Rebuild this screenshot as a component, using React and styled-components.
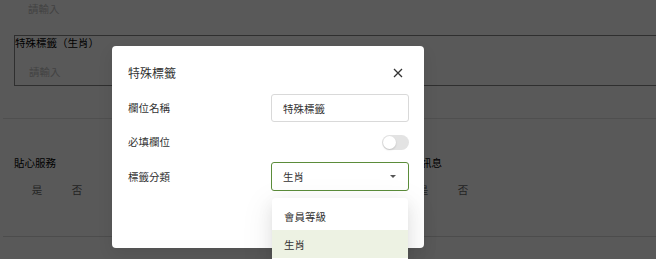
import React from 'react';
import styled, { createGlobalStyle } from 'styled-components';

const GlobalStyle = createGlobalStyle`
  html, body { margin: 0; padding: 0; background: #fff; overflow: hidden; }
  body { font-family: "Noto Sans CJK TC", "Noto Sans", sans-serif; color: #333; }
  * { box-sizing: border-box; }
`;

const Page = styled.div`
  position: relative;
  width: 656px;
  height: 259px;
  overflow: hidden;
  padding-left: 14px;
`;

const TopField = styled.div`
  height: 35px;
  padding-left: 14px;
`;

const Placeholder = styled.div`
  font-size: 10.5px;
  line-height: 18px;
  color: #bfbfbf;
  margin-top: ${(p) => p.$top || 0}px;
`;

const EditingBox = styled.div`
  width: 700px;
  height: 51px;
  border: 1px solid #888;
  border-right: none;
`;

const BoxLabel = styled.div`
  font-size: 10.5px;
  line-height: 14px;
  color: #000;
`;

const BoxBody = styled.div`
  padding-left: 14px;
`;

const Divider = styled.div`
  height: 1px;
  background: ${(p) => p.$color};
  margin-top: ${(p) => p.$top}px;
  margin-left: -11px;
  width: 680px;
`;

const Sections = styled.div`
  display: grid;
  grid-template-columns: 386px 386px;
  margin-top: 36px;
`;

const Section = styled.div`
  display: flex;
  flex-direction: column;
`;

const SectionTitle = styled.div`
  font-size: 10.5px;
  line-height: 16px;
  color: #000;
`;

const Options = styled.div`
  display: flex;
  margin-top: 11px;
  margin-left: 3px;
`;

const Option = styled.div`
  width: 40px;
  text-align: center;
  font-size: 10.5px;
  line-height: 16px;
  color: #666;
`;

const Overlay = styled.div`
  position: absolute;
  inset: 0;
  background: rgba(0, 0, 0, 0.65);
`;

const Modal = styled.div`
  position: absolute;
  left: 112px;
  top: 46px;
  width: 312px;
  height: 202px;
  background: #fff;
  border-radius: 4px;
  padding: 16px 15px 0 16px;
  box-shadow: 0 6px 16px rgba(0, 0, 0, 0.08);
`;

const Header = styled.div`
  display: flex;
  align-items: center;
  justify-content: space-between;
  height: 22px;
`;

const Title = styled.div`
  font-size: 12px;
  color: #333;
  line-height: 22px;
`;

const CloseButton = styled.div`
  width: 22px;
  height: 22px;
  display: flex;
  align-items: center;
  justify-content: center;
  margin-right: 0;
`;

const Form = styled.div`
  display: grid;
  grid-template-columns: 1fr 138px;
  row-gap: 6px;
  align-items: center;
  margin-top: 10px;
`;

const Label = styled.div`
  font-size: 10.5px;
  color: #333;
  line-height: 16px;
`;

const Input = styled.div`
  height: 28px;
  border: 1px solid #d9d9d9;
  border-radius: 3px;
  padding: 0 11px;
  display: flex;
  align-items: center;
  font-size: 10.5px;
  color: #333;
`;

const SwitchCell = styled.div`
  height: 28px;
  display: flex;
  align-items: center;
  justify-content: flex-end;
`;

const Track = styled.div`
  position: relative;
  width: 27px;
  height: 15px;
  border-radius: 8px;
  background: #e3e3e3;
`;

const Knob = styled.div`
  position: absolute;
  left: 1px;
  top: 1px;
  width: 13px;
  height: 13px;
  border-radius: 50%;
  background: #fff;
  box-shadow: 0 1px 2px rgba(0, 0, 0, 0.15);
`;

const SelectWrap = styled.div`
  position: relative;
`;

const Select = styled.div`
  height: 29px;
  border: 1px solid #5b8c3a;
  border-radius: 3px;
  padding: 0 11px;
  display: flex;
  align-items: center;
  justify-content: space-between;
  font-size: 10.5px;
  color: #333;
`;

const Caret = styled.span`
  width: 0;
  height: 0;
  border-left: 3px solid transparent;
  border-right: 3px solid transparent;
  border-top: 3.5px solid #555;
  margin-right: 1px;
`;

const Dropdown = styled.div`
  position: absolute;
  left: 1px;
  right: 1px;
  top: calc(100% + 7px);
  background: #fff;
  border-radius: 4px;
  padding: 4px 0;
  box-shadow: 0 3px 6px -4px rgba(0, 0, 0, 0.12), 0 6px 16px rgba(0, 0, 0, 0.08),
    0 9px 28px 8px rgba(0, 0, 0, 0.05);
  z-index: 2;
`;

const Item = styled.div`
  height: 28px;
  padding: 0 12px;
  display: flex;
  align-items: center;
  font-size: 10.5px;
  color: #333;
  background: ${(p) => (p.$selected ? '#edf2e3' : '#fff')};
`;

export default function App() {
  return (
    <>
      <GlobalStyle />
      <Page>
        <TopField>
          <Placeholder>請輸入</Placeholder>
        </TopField>
        <EditingBox>
          <BoxLabel>特殊標籤（生肖）</BoxLabel>
          <BoxBody>
            <Placeholder $top={13}>請輸入</Placeholder>
          </BoxBody>
        </EditingBox>
        <Divider $color="#e2e2e2" $top={32} />
        <Sections>
          <Section>
            <SectionTitle>貼心服務</SectionTitle>
            <Options>
              <Option>是</Option>
              <Option>否</Option>
            </Options>
          </Section>
          <Section>
            <SectionTitle>推播訊息</SectionTitle>
            <Options>
              <Option>是</Option>
              <Option>否</Option>
            </Options>
          </Section>
        </Sections>
        <Divider $color="#d9d9d9" $top={38} />
        <Overlay />
        <Modal>
          <Header>
            <Title>特殊標籤</Title>
            <CloseButton>
              <svg width="10" height="10" viewBox="0 0 10 10">
                <path d="M1 1L9 9M9 1L1 9" stroke="#333" strokeWidth="1.3" fill="none" />
              </svg>
            </CloseButton>
          </Header>
          <Form>
            <Label>欄位名稱</Label>
            <Input>特殊標籤</Input>
            <Label>必填欄位</Label>
            <SwitchCell>
              <Track>
                <Knob />
              </Track>
            </SwitchCell>
            <Label>標籤分類</Label>
            <SelectWrap>
              <Select>
                生肖
                <Caret />
              </Select>
              <Dropdown>
                <Item>會員等級</Item>
                <Item $selected>生肖</Item>
              </Dropdown>
            </SelectWrap>
          </Form>
        </Modal>
      </Page>
    </>
  );
}
